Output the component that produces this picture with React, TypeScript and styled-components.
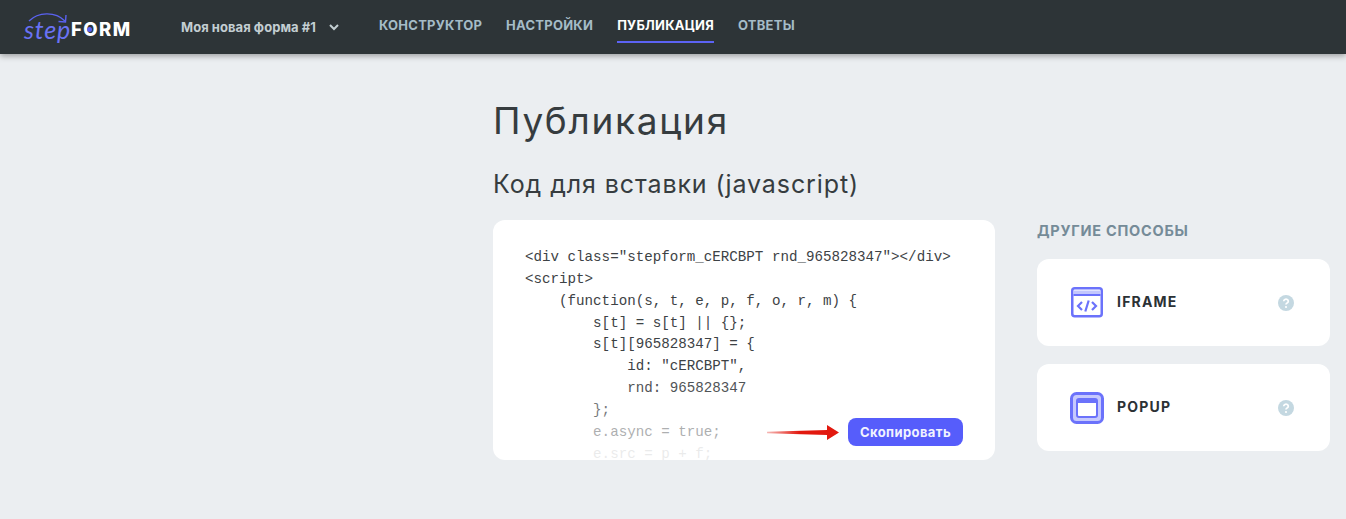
import styled, { createGlobalStyle } from "styled-components";

const GlobalStyle = createGlobalStyle`
	html, body {
		margin: 0;
		padding: 0;
		height: 100%;
		background: #ebeef1;
		font-family: Inter, "Noto Sans", sans-serif;
		overflow: hidden;
	}
`;

const codeLines = [
	{ text: '<div class="stepform_cERCBPT rnd_965828347"></div>', fade: 1 },
	{ text: "<script>", fade: 1 },
	{ text: "    (function(s, t, e, p, f, o, r, m) {", fade: 1 },
	{ text: "        s[t] = s[t] || {};", fade: 1 },
	{ text: "        s[t][965828347] = {", fade: 1 },
	{ text: '            id: "cERCBPT",', fade: 1 },
	{ text: "            rnd: 965828347", fade: 0.9 },
	{ text: "        };", fade: 0.7 },
	{ text: "        e.async = true;", fade: 0.42 },
	{ text: "        e.src = p + f;", fade: 0.1 },
];

const navItems = ["КОНСТРУКТОР", "НАСТРОЙКИ", "ПУБЛИКАЦИЯ", "ОТВЕТЫ"];

const Header = styled.header`
	position: relative;
	height: 54px;
	display: flex;
	align-items: center;
	background: #2d3437;
	box-shadow: 0 2px 6px rgba(0, 0, 0, 0.35);
`;

const Logo = styled.div`
	position: relative;
	box-sizing: border-box;
	width: 109px;
	margin-left: 24px;
	height: 30px;
	padding-bottom: 2px;
	display: flex;
	align-items: flex-end;
	line-height: 21px;
`;

const LogoStep = styled.span`
	font-family: Lato, sans-serif;
	font-size: 25px;
	font-style: italic;
	font-weight: 400;
	color: #6a72f5;
	letter-spacing: 0.8px;
`;

const LogoForm = styled.span`
	font-size: 18.5px;
	font-weight: 800;
	color: #fff;
	letter-spacing: 1.5px;
`;

const LogoArc = styled.svg`
	position: absolute;
	left: 4px;
	top: 0;
`;

const LogoDot = styled.span`
	position: absolute;
	left: 62.5px;
	top: 14.5px;
	width: 5px;
	height: 5px;
	border-radius: 50%;
	background: #5a62f0;
`;

const FormPicker = styled.div`
	display: flex;
	align-items: center;
	margin-left: 48px;
	width: 198px;
	gap: 13px;
	color: #c3ced2;
	font-size: 13px;
	font-weight: 700;
	letter-spacing: 0.05px;
	white-space: nowrap;
`;

const Nav = styled.nav`
	display: flex;
	height: 100%;
	gap: 24px;
`;

const NavLink = styled.a<{ $active?: boolean }>`
	display: flex;
	align-items: center;
	height: 100%;
	box-sizing: border-box;
	padding-bottom: 5px;
	position: relative;
	font-size: 13px;
	font-weight: 700;
	letter-spacing: 0.25px;
	color: ${(p) => (p.$active ? "#ffffff" : "#a5bcc7")};
	&::after {
		content: "";
		display: ${(p) => (p.$active ? "block" : "none")};
		position: absolute;
		left: 0;
		right: 0;
		top: 41px;
		height: 2px;
		background: #5c63f5;
	}
`;

const Page = styled.main`
	display: grid;
	grid-template-columns: 502px 293px;
	column-gap: 42px;
	padding-left: 493px;
`;

const Heading = styled.h1`
	grid-column: 1 / 3;
	margin: 44px 0 0;
	height: 46px;
	font-size: 37px;
	line-height: 46px;
	font-weight: 400;
	letter-spacing: 1.7px;
	color: #363c3f;
`;

const Subheading = styled.h2`
	grid-column: 1 / 3;
	margin: 23px 0 0;
	height: 34px;
	font-size: 25px;
	line-height: 34px;
	font-weight: 400;
	letter-spacing: 0.9px;
	color: #363c3f;
`;

const CodeCard = styled.section`
	position: relative;
	margin-top: 19px;
	height: 240px;
	border-radius: 12px;
	background: #fff;
	overflow: hidden;
	box-sizing: border-box;
	padding: 27px 32px 0;
`;

const CodeLine = styled.pre`
	margin: 0;
	height: 21.85px;
	font-family: "Liberation Mono", "Courier New", monospace;
	font-size: 14.2px;
	line-height: 21.85px;
	color: #3d4245;
`;

const CopyRow = styled.div`
	position: absolute;
	right: 32px;
	top: 198px;
	display: flex;
	align-items: center;
	gap: 9px;
`;

const CopyButton = styled.button`
	width: 115px;
	height: 28px;
	padding: 0;
	border: 0;
	border-radius: 8px;
	background: #565dfb;
	color: #f1f3ff;
	font-family: inherit;
	font-size: 13px;
	font-weight: 700;
	letter-spacing: 0.4px;
`;

const Side = styled.aside`
	margin-top: 19px;
	display: flex;
	flex-direction: column;
`;

const SideTitle = styled.h3`
	margin: 0 0 18px;
	height: 21px;
	font-size: 14.5px;
	line-height: 22px;
	font-weight: 700;
	letter-spacing: 0.75px;
	color: #758b98;
`;

const MethodCard = styled.div`
	display: flex;
	align-items: center;
	height: 87px;
	margin-bottom: 18px;
	padding: 0 36px 0 33px;
	border-radius: 12px;
	background: #fff;
`;

const IconSlot = styled.span`
	display: flex;
	justify-content: center;
	width: 34px;
	margin-right: 13px;
`;

const MethodName = styled.span`
	flex: 1;
	padding-bottom: 2px;
	font-size: 14px;
	font-weight: 700;
	letter-spacing: 1.2px;
	color: #2b3135;
`;

const HelpIcon = () => (
	<svg width="16" height="16" viewBox="0 0 16 16">
		<circle cx="8" cy="8" r="8" fill="#c4d8e1" />
		<path d="M5.7 6.2a2.3 2.1 0 1 1 3.4 1.9c-.8.4-1.1.8-1.1 1.5" fill="none" stroke="#fff" strokeWidth="1.7" />
		<circle cx="8" cy="12" r="1.1" fill="#fff" />
	</svg>
);

const IframeIcon = () => (
	<svg width="32" height="31" viewBox="0 0 32 31">
		<rect x="1.25" y="1.25" width="29.5" height="28" rx="2.5" fill="#fff" stroke="#6b72fb" strokeWidth="2.5" />
		<rect x="2.5" y="3.5" width="27" height="3.5" fill="#c3c7fd" />
		<rect x="2.5" y="7" width="27" height="2" fill="#6b72fb" />
		<path d="M11 15l-4 4 4 4M21 15l4 4-4 4M17.7 13.5l-3.4 11" fill="none" stroke="#6b72fb" strokeWidth="2.2" />
	</svg>
);

const PopupIcon = () => (
	<svg width="34" height="32" viewBox="0 0 34 32">
		<rect x="1.5" y="1.5" width="31" height="29" rx="5" fill="#c6c9fd" stroke="#6b72fb" strokeWidth="3" />
		<rect x="7" y="7" width="20" height="18" rx="2" fill="#fff" stroke="#6b72fb" strokeWidth="2" />
		<rect x="7" y="7" width="20" height="4" fill="#6b72fb" />
	</svg>
);

export default function App() {
	return (
		<>
			<GlobalStyle />
			<Header>
				<Logo>
					<LogoArc width="46" height="16" viewBox="0 0 46 16">
						<path d="M1 9C10 0 27-1 37 9" fill="none" stroke="#5a62f0" strokeWidth="1.4" />
						<path d="M38 3l-.5 7-7-.5" fill="none" stroke="#5a62f0" strokeWidth="1.4" />
					</LogoArc>
					<LogoStep>step</LogoStep>
					<LogoForm>FORM</LogoForm>
					<LogoDot />
				</Logo>
				<FormPicker>
					Моя новая форма #1
					<svg width="10" height="7" viewBox="0 0 10 7">
						<path d="M1 1l4 4 4-4" fill="none" stroke="#c3ced2" strokeWidth="2" />
					</svg>
				</FormPicker>
				<Nav>
					{navItems.map((item) => (
						<NavLink key={item} $active={item === "ПУБЛИКАЦИЯ"}>
							{item}
						</NavLink>
					))}
				</Nav>
			</Header>
			<Page>
				<Heading>Публикация</Heading>
				<Subheading>Код для вставки (javascript)</Subheading>
				<CodeCard>
					{codeLines.map((line) => (
						<CodeLine key={line.text} style={{ opacity: line.fade }}>
							{line.text}
						</CodeLine>
					))}
					<CopyRow>
						<svg width="72" height="15" viewBox="0 0 72 15">
							<defs>
								<linearGradient id="arrowFade" x1="0" x2="1" y1="0" y2="0">
									<stop offset="0" stopColor="#e2190f" stopOpacity="0.3" />
									<stop offset="0.45" stopColor="#e2190f" />
								</linearGradient>
							</defs>
							<path d="M0 6.8L60 5V0L72 7.5L60 15V10L0 8.2Z" fill="url(#arrowFade)" />
						</svg>
						<CopyButton>Скопировать</CopyButton>
					</CopyRow>
				</CodeCard>
				<Side>
					<SideTitle>ДРУГИЕ СПОСОБЫ</SideTitle>
					<MethodCard>
						<IconSlot>
							<IframeIcon />
						</IconSlot>
						<MethodName>IFRAME</MethodName>
						<HelpIcon />
					</MethodCard>
					<MethodCard>
						<IconSlot>
							<PopupIcon />
						</IconSlot>
						<MethodName>POPUP</MethodName>
						<HelpIcon />
					</MethodCard>
				</Side>
			</Page>
		</>
	);
}
